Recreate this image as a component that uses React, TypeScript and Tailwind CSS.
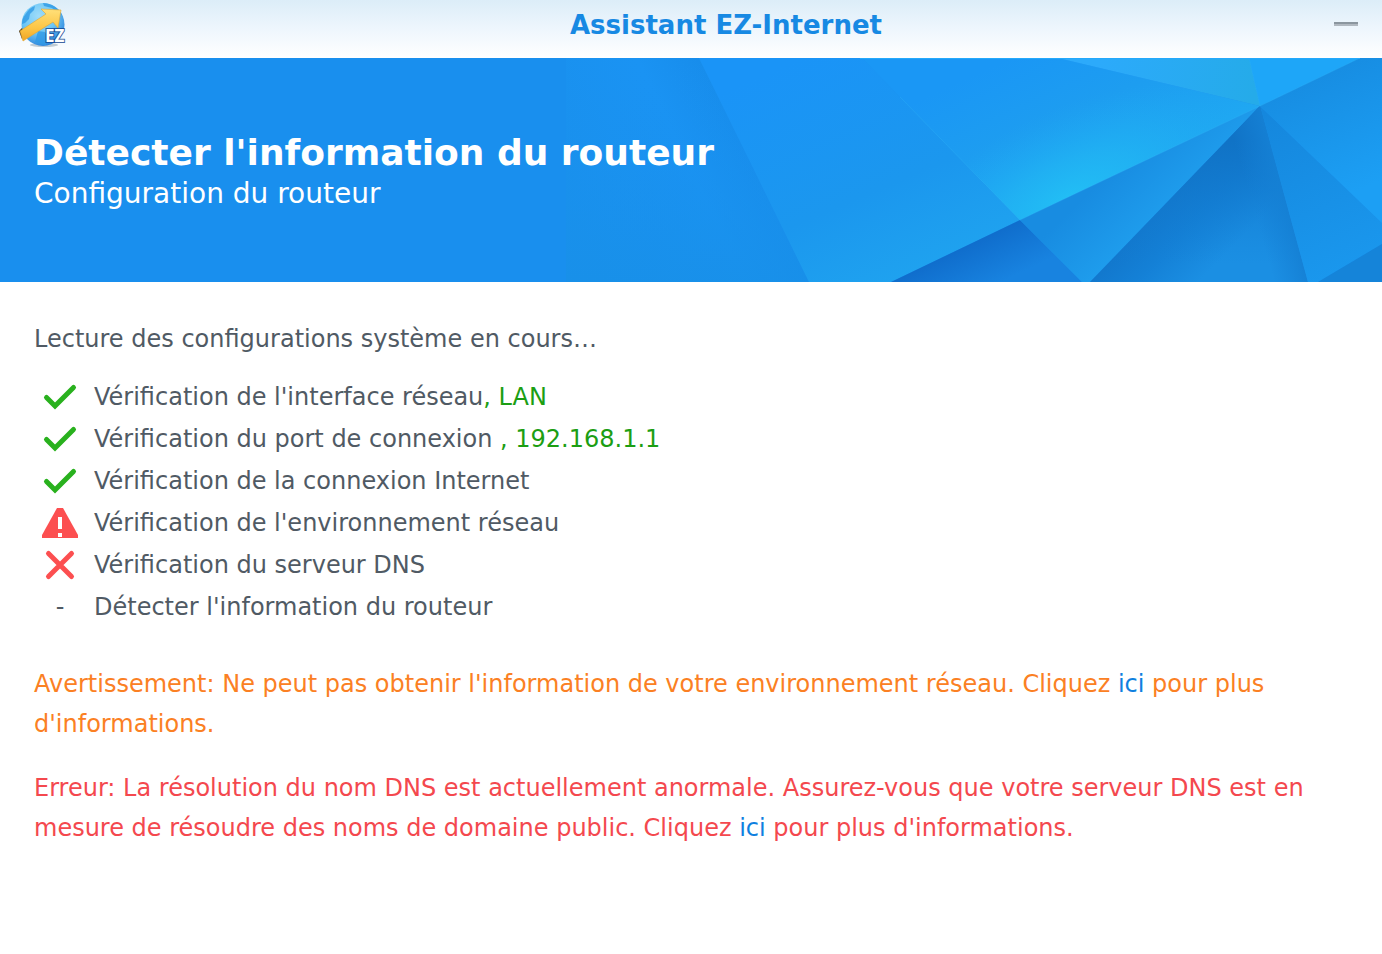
import type { ReactNode } from 'react';

type Status = 'ok' | 'warning' | 'error' | 'pending';

const checks: { label: string; result?: string; status: Status }[] = [
  { label: "Vérification de l'interface réseau", result: ', LAN', status: 'ok' },
  { label: 'Vérification du port de connexion ', result: ', 192.168.1.1', status: 'ok' },
  { label: 'Vérification de la connexion Internet', status: 'ok' },
  { label: "Vérification de l'environnement réseau", status: 'warning' },
  { label: 'Vérification du serveur DNS', status: 'error' },
  { label: "Détecter l'information du routeur", status: 'pending' },
];

function StatusIcon({ status }: { status: Status }) {
  if (status === 'pending') return <span>-</span>;
  return (
    <svg viewBox="0 0 36 36" className="size-9" fill="none" aria-hidden="true">
      {status === 'ok' && (
        <path d="M4.5 18.5 13 27 31.5 8.5" stroke="#29b11e" strokeWidth="5" strokeLinecap="round" />
      )}
      {status === 'warning' && (
        <>
          <path d="M15 3h6l15 27v3H0v-3z" fill="#fc4f50" />
          <path d="M16 12h4v12h-4zM16 28h4v4h-4z" fill="#fff" />
        </>
      )}
      {status === 'error' && (
        <path d="m6.5 6.5 23 23M29.5 6.5l-23 23" stroke="#fc4f50" strokeWidth="5" strokeLinecap="round" />
      )}
    </svg>
  );
}

function AppLogo() {
  return (
    <svg viewBox="0 0 48 48" className="size-12" aria-hidden="true">
      <defs>
        <radialGradient id="globe" cx="0.4" cy="0.3" r="0.8">
          <stop offset="0" stopColor="#9fdcfa" />
          <stop offset="0.5" stopColor="#6cc6f5" />
          <stop offset="1" stopColor="#1b74d6" />
        </radialGradient>
        <linearGradient id="arrow" x1="0" y1="0" x2="0" y2="1">
          <stop offset="0" stopColor="#ffe07a" />
          <stop offset="0.6" stopColor="#fcc545" />
          <stop offset="1" stopColor="#f0a423" />
        </linearGradient>
      </defs>
      <ellipse cx="26" cy="45" rx="14" ry="2" fill="#6f8796" opacity="0.4" />
      <circle cx="25" cy="24.5" r="21.5" fill="url(#globe)" />
      <path
        d="M7 15c3-5 6-8 10-9l-1 4-4 4-1 5-4 4-3 1c0-4 1-7 3-9zM25 3c9 0 16 5 19 12l-5-3-5-4-8-2zM20 31l7 1 3 5-2 8c-4 0-8-1-11-3z"
        fill="#2f9ae6"
        opacity="0.8"
      />
      <path d="m1 31 3-3 3 7-3 4z" fill="#3b2b12" />
      <path d="m2 31 26-17-5-5 20 1-3 18-5-6L5 41z" fill="url(#arrow)" stroke="#e2a630" strokeWidth="0.6" />
      <text
        x="27"
        y="42"
        fontSize="17"
        fontWeight="700"
        fill="#fff"
        stroke="#12408c"
        strokeWidth="2"
        strokeOpacity="0.8"
        paintOrder="stroke"
        className="font-['Open_Sans',sans-serif]"
      >
        EZ
      </text>
    </svg>
  );
}

function BannerArt() {
  return (
    <svg viewBox="566 58 816 224" preserveAspectRatio="xMaxYMid slice" className="absolute inset-y-0 right-0 h-full w-[816px]" aria-hidden="true">
      <defs>
        <linearGradient id="fade" gradientUnits="userSpaceOnUse" x1="566" y1="200" x2="754" y2="108">
          <stop offset="0" stopColor="#1990ec" />
          <stop offset="0.6" stopColor="#1a93f3" />
          <stop offset="1" stopColor="#168ae8" />
        </linearGradient>
        <linearGradient id="lower" x1="0" y1="0" x2="0" y2="1">
          <stop offset="0" stopColor="#1a92f3" stopOpacity="0" />
          <stop offset="1" stopColor="#1890e8" stopOpacity="0.8" />
        </linearGradient>
        <linearGradient id="second" gradientUnits="userSpaceOnUse" x1="800" y1="58" x2="900" y2="290">
          <stop offset="0" stopColor="#1a94f7" />
          <stop offset="0.6" stopColor="#1b97ee" />
          <stop offset="1" stopColor="#1fa3ef" />
        </linearGradient>
        <linearGradient id="bright" gradientUnits="userSpaceOnUse" x1="1010" y1="58" x2="1073" y2="195">
          <stop offset="0" stopColor="#1a97f5" />
          <stop offset="0.5" stopColor="#1d9df0" />
          <stop offset="1" stopColor="#1fa8f2" />
        </linearGradient>
        <radialGradient id="glow" gradientUnits="userSpaceOnUse" cx="0" cy="0" r="1" gradientTransform="translate(1070 200) rotate(-25.4) scale(190 90)">
          <stop offset="0" stopColor="#22bff5" />
          <stop offset="0.4" stopColor="#21b6f3" stopOpacity="0.7" />
          <stop offset="1" stopColor="#1fa8f2" stopOpacity="0" />
        </radialGradient>
        <linearGradient id="top" gradientUnits="userSpaceOnUse" x1="1100" y1="58" x2="1255" y2="90">
          <stop offset="0" stopColor="#2caafb" />
          <stop offset="1" stopColor="#25abe9" />
        </linearGradient>
        <linearGradient id="wedge" gradientUnits="userSpaceOnUse" x1="1100" y1="182" x2="1144" y2="228">
          <stop offset="0" stopColor="#188ce1" />
          <stop offset="1" stopColor="#1e9cec" />
        </linearGradient>
        <linearGradient id="deep" gradientUnits="userSpaceOnUse" x1="950" y1="250" x2="972" y2="296">
          <stop offset="0" stopColor="#0f6ccb" />
          <stop offset="1" stopColor="#1883e0" />
        </linearGradient>
        <linearGradient id="shade" gradientUnits="userSpaceOnUse" x1="1150" y1="200" x2="1215" y2="265">
          <stop offset="0" stopColor="#1174c9" />
          <stop offset="0.5" stopColor="#1480d6" />
          <stop offset="1" stopColor="#1b8fe3" />
        </linearGradient>
        <linearGradient id="shadeTop" x1="0" y1="0" x2="0" y2="1">
          <stop offset="0.2" stopColor="#1073c6" />
          <stop offset="0.9" stopColor="#1480d6" stopOpacity="0" />
        </linearGradient>
        <linearGradient id="shadeRight" gradientUnits="userSpaceOnUse" x1="1265" y1="250" x2="1300" y2="240">
          <stop offset="0" stopColor="#1580d6" stopOpacity="0" />
          <stop offset="1" stopColor="#1580d4" />
        </linearGradient>
        <linearGradient id="sliver" gradientUnits="userSpaceOnUse" x1="1270" y1="110" x2="1345" y2="282">
          <stop offset="0" stopColor="#1587dd" />
          <stop offset="1" stopColor="#1a98ee" />
        </linearGradient>
        <linearGradient id="right" gradientUnits="userSpaceOnUse" x1="1310" y1="75" x2="1360" y2="190">
          <stop offset="0" stopColor="#178de2" />
          <stop offset="1" stopColor="#1c9ff4" />
        </linearGradient>
      </defs>
      <path d="M566 58h133l110 224H566z" fill="url(#fade)" />
      <path d="M566 58h133l110 224H566z" fill="url(#lower)" />
      <path d="M699 58h163l158 162-129 62h-82z" fill="url(#second)" />
      <path d="M862 58h196l202 48-240 114z" fill="url(#bright)" />
      <path d="M862 58h196l202 48-240 114z" fill="url(#glow)" />
      <path d="M1058 58h191l11 48z" fill="url(#top)" />
      <path d="M1249 58h111l-100 48z" fill="#1ea6f8" />
      <path d="m1020 220 62 62H891z" fill="url(#deep)" />
      <path d="m1260 106-170 176h-8l-62-62z" fill="url(#wedge)" />
      <path d="m1260 106 48 176h-218z" fill="url(#shade)" />
      <path d="m1260 106 48 176h-218z" fill="url(#shadeTop)" />
      <path d="m1260 106 48 176h-218z" fill="url(#shadeRight)" />
      <path d="m1260 106 122 117v21l-64 38h-10z" fill="url(#sliver)" />
      <path d="m1260 106 100-48h22v165z" fill="url(#right)" />
      <path d="m1318 282 64-38v38z" fill="#1584d9" />
      <path d="m900 97 120 123M1020 220l240-114 100-48M1249 58l11 48" fill="none" stroke="#35bdf8" strokeOpacity="0.3" />
      <path d="M860 58.5h500" stroke="#24a9fb" />
    </svg>
  );
}

function HelpLink({ children }: { children: ReactNode }) {
  return (
    <a href="#" className="text-[#0f80df]">
      {children}
    </a>
  );
}

export default function App() {
  return (
    <div className="min-h-screen bg-white font-['DejaVu_Sans',sans-serif] text-2xl text-[#505a64]">
      <header className="grid h-[58px] grid-cols-[72px_1fr_72px] items-start bg-linear-to-b from-[#dcedf8] via-[#eef6fd] to-white">
        <div className="pl-[18px]">
          <AppLogo />
        </div>
        <h1 className="pl-[70px] text-center text-[26px] leading-[50px] font-bold text-[#1789e3]">Assistant EZ-Internet</h1>
        <button type="button" aria-label="Réduire" className="mt-3 mr-6 flex h-6 w-6 items-center justify-self-end">
          <span className="h-1 w-6 border-t-2 border-[#8b969f] bg-[#b0b8c0]" />
        </button>
      </header>

      <section className="relative flex h-[224px] flex-col justify-center overflow-hidden bg-[#198fee] px-[34px] pt-1 text-white">
        <BannerArt />
        <h2 className="relative text-4xl leading-[44px] font-bold">Détecter l'information du routeur</h2>
        <p className="relative text-[28px] leading-[38px]">Configuration du routeur</p>
      </section>

      <main className="px-[34px] pt-[37px]">
        <p className="leading-10">Lecture des configurations système en cours…</p>
        <ul className="mt-[17px]">
          {checks.map((c) => (
            <li key={c.label} className="flex h-[42px] items-center">
              <span className="mr-2 flex w-[52px] justify-center">
                <StatusIcon status={c.status} />
              </span>
              <span className="whitespace-pre">
                {c.label}
                {c.result && <span className="text-[#1c9e13]">{c.result}</span>}
              </span>
            </li>
          ))}
        </ul>
        <p className="mt-9 leading-10 text-[#fb8023]">
          Avertissement: Ne peut pas obtenir l'information de votre environnement réseau. Cliquez <HelpLink>ici</HelpLink> pour plus
          d'informations.
        </p>
        <p className="mt-6 leading-10 text-[#f4484e]">
          Erreur: La résolution du nom DNS est actuellement anormale. Assurez-vous que votre serveur DNS est en mesure de résoudre des
          noms de domaine public. Cliquez <HelpLink>ici</HelpLink> pour plus d'informations.
        </p>
      </main>
    </div>
  );
}
